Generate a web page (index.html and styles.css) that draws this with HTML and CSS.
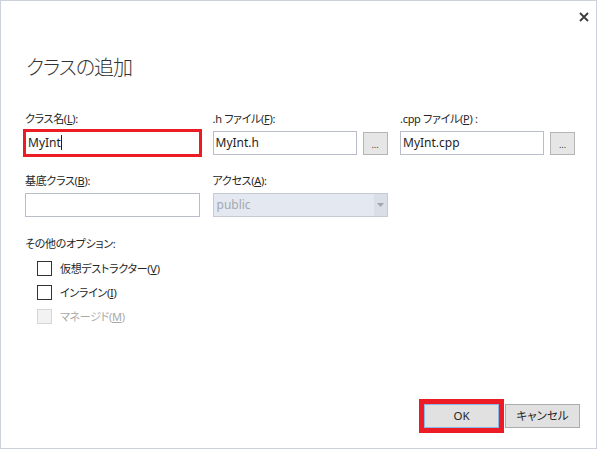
FILE: index.html
```html
<!DOCTYPE html>
<html lang="ja">
<head>
    <meta charset="UTF-8">
    <title>クラスの追加</title>
    <link rel="stylesheet" href="styles.css">
</head>
<body>
    <div class="dialog">
        <div class="titlebar">
            <svg class="close" width="10" height="10" viewBox="0 0 10 10">
                <path d="M1 1L9 9M9 1L1 9" stroke="#3c3c3c" stroke-width="1.8" fill="none"/>
            </svg>
        </div>
        <h1 class="title">クラスの追加</h1>

        <div class="fields">
            <div class="field">
                <div class="label">クラス名(<u>L</u>):</div>
                <div class="textbox marked">MyInt<span class="caret"></span></div>
            </div>
            <div class="field">
                <div class="label">.h ファイル(<u>F</u>):</div>
                <div class="file-row">
                    <div class="textbox">MyInt.h</div>
                    <div class="browse">...</div>
                </div>
            </div>
            <div class="field">
                <div class="label">.cpp ファイル(<u>P</u>) :</div>
                <div class="file-row">
                    <div class="textbox">MyInt.cpp</div>
                    <div class="browse">...</div>
                </div>
            </div>

            <div class="field">
                <div class="label">基底クラス(<u>B</u>):</div>
                <div class="textbox"></div>
            </div>
            <div class="field">
                <div class="label">アクセス(<u>A</u>):</div>
                <div class="combo disabled">
                    <span class="combo-text">public</span>
                    <span class="combo-arrow">
                        <svg width="7" height="4" viewBox="0 0 7 4"><path d="M0 0H7L3.5 4Z" fill="#a2a6ad"/></svg>
                    </span>
                </div>
            </div>
        </div>

        <div class="options">
            <div class="label">その他のオプション:</div>
            <div class="check"><span class="box"></span>仮想デストラクター(<u>V</u>)</div>
            <div class="check"><span class="box"></span>インライン(<u>I</u>)</div>
            <div class="check disabled"><span class="box"></span>マネージド(<u>M</u>)</div>
        </div>

        <div class="footer">
            <div class="btn default marked-btn">OK</div>
            <div class="btn">キャンセル</div>
        </div>
    </div>
</body>
</html>
```

FILE: styles.css
```css
body {
    margin: 0;
    background-color: #fff;
    font-family: "Noto Sans", "Noto Sans CJK JP", sans-serif;
    font-size: 11px;
    color: #262626;
    font-feature-settings: "palt";
}
.dialog {
    width: 597px;
    height: 449px;
    box-sizing: border-box;
    border: 1px solid #cdd1dd;
    background-color: #fff;
    padding: 0 0 20px 24px;
    display: flex;
    flex-direction: column;
}
.titlebar {
    height: 34px;
    box-sizing: border-box;
    padding: 11px 7px 0 0;
    display: flex;
    justify-content: flex-end;
}
.title {
    margin: 17px 0 0 1px;
    font-family: "Noto Sans CJK JP", sans-serif;
    font-size: 20px;
    font-weight: 300;
    line-height: 30px;
    letter-spacing: -1px;
    color: #333;
}
.fields {
    margin-top: 29px;
    display: grid;
    grid-template-columns: 175px 175px 175px;
    column-gap: 12.5px;
    row-gap: 18px;
}
.label {
    line-height: 16px;
    margin-bottom: 4px;
    white-space: nowrap;
    letter-spacing: -0.3px;
}
.textbox {
    height: 24px;
    box-sizing: border-box;
    border: 1px solid #b9bdc9;
    background-color: #fff;
    padding: 0 2px;
    line-height: 22px;
    font-size: 12px;
    color: #1e1e1e;
    flex: 1;
}
.textbox.marked {
    border-color: #ed1c24;
    outline: 2px solid #ed1c24;
}
.caret {
    display: inline-block;
    width: 1px;
    height: 15px;
    background-color: #1e1e1e;
    vertical-align: -3px;
}
.file-row {
    display: flex;
    align-items: center;
    gap: 6px;
}
.browse {
    width: 25px;
    height: 23px;
    box-sizing: border-box;
    border: 1px solid #b5b5b5;
    background-color: #e6e6e6;
    font-size: 9px;
    line-height: 24px;
    text-align: center;
    color: #333;
}
.combo {
    height: 24px;
    box-sizing: border-box;
    border: 1px solid #c5cad5;
    background-color: #e3e8f1;
    display: flex;
}
.combo-text {
    flex: 1;
    padding-left: 3px;
    line-height: 22px;
    font-size: 12px;
    color: #a4a8b0;
}
.combo-arrow {
    width: 13px;
    background-color: #d9dee7;
    display: flex;
    align-items: center;
    justify-content: center;
}
.options {
    margin-top: 19px;
}
.check {
    height: 24px;
    display: flex;
    align-items: center;
    padding-left: 12px;
    letter-spacing: -0.3px;
}
.check .box {
    width: 15px;
    height: 15px;
    box-sizing: border-box;
    border: 1px solid #333;
    background-color: #fff;
    margin-right: 8px;
}
.check.disabled {
    color: #a8a8a8;
}
.check.disabled .box {
    border-color: #d6d6d6;
    background-color: #f2f2f2;
}
.footer {
    margin-top: auto;
    padding-right: 16px;
    display: flex;
    justify-content: flex-end;
    gap: 6px;
}
.btn {
    width: 75px;
    height: 24px;
    box-sizing: border-box;
    border: 1px solid #adadad;
    background-color: #e1e1e1;
    text-align: center;
    line-height: 22px;
    font-size: 11.5px;
    color: #262626;
}
.btn.default {
    border-color: #8cb8e8;
}
.marked-btn {
    outline: 5px solid #ed1c24;
}
```
